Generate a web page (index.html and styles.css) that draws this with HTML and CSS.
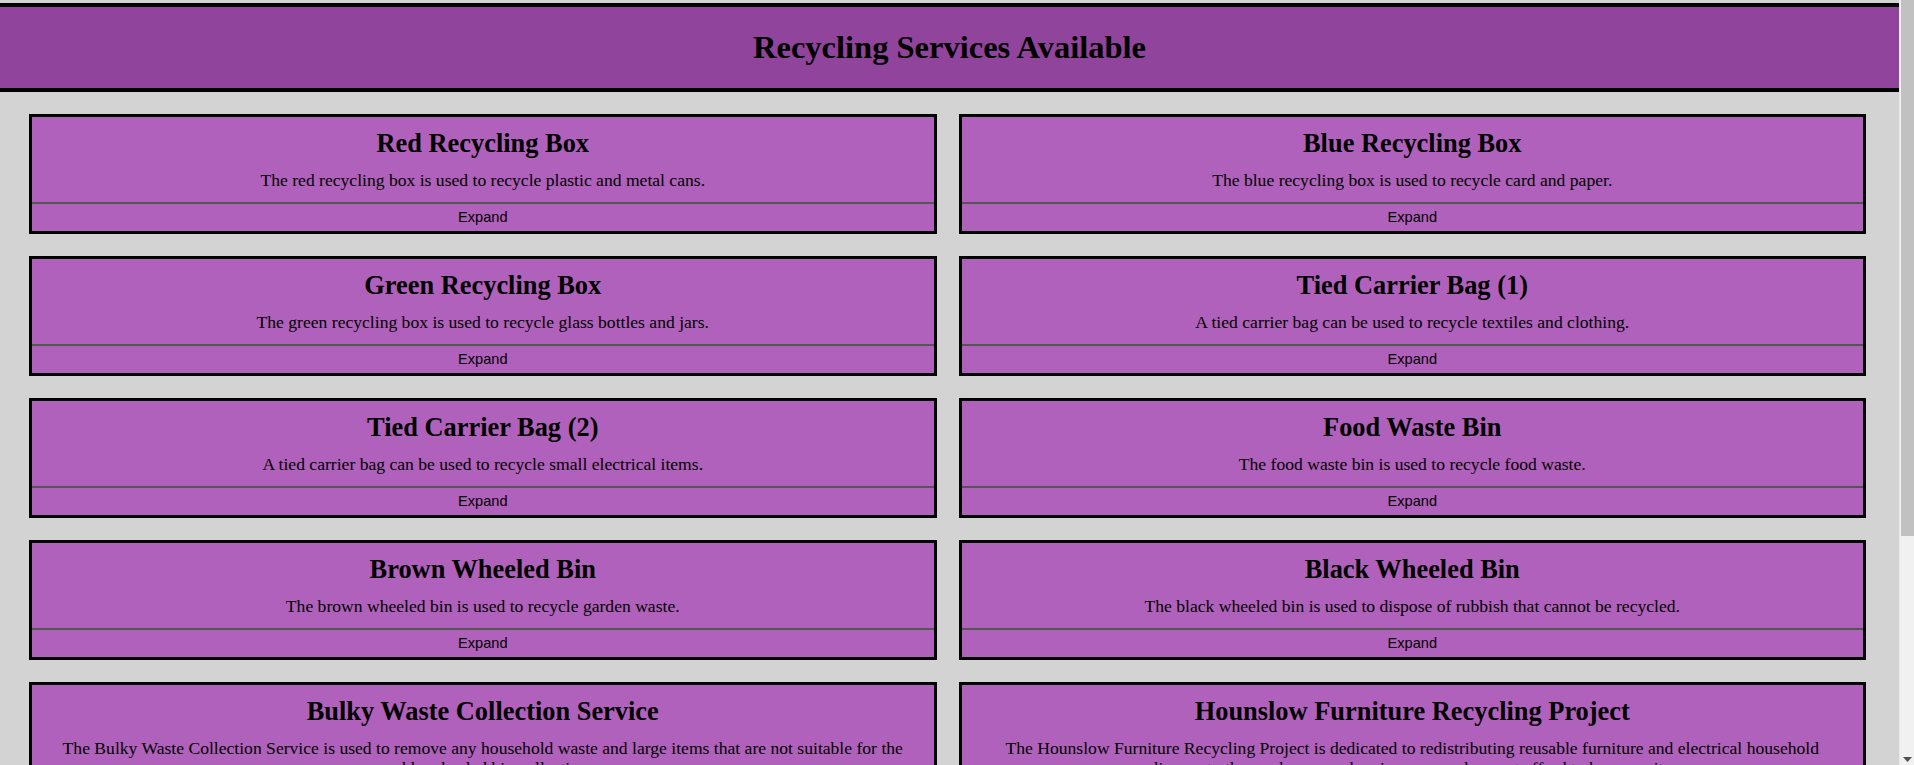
FILE: index.html
```html
<!DOCTYPE html>
<html lang="en">
<head>
<meta charset="utf-8">
<title>Recycling Services Available</title>
<link rel="stylesheet" href="styles.css">
</head>
<body>
<div class="page">
<header class="site-header">
  <h1 class="site-title">Recycling Services Available</h1>
</header>
<main class="services">
  <section class="card">
    <h2 class="card-title">Red Recycling Box</h2>
    <p class="card-text">The red recycling box is used to recycle plastic and metal cans.</p>
    <button class="expand" type="button">Expand</button>
  </section>
  <section class="card">
    <h2 class="card-title">Blue Recycling Box</h2>
    <p class="card-text">The blue recycling box is used to recycle card and paper.</p>
    <button class="expand" type="button">Expand</button>
  </section>
  <section class="card">
    <h2 class="card-title">Green Recycling Box</h2>
    <p class="card-text">The green recycling box is used to recycle glass bottles and jars.</p>
    <button class="expand" type="button">Expand</button>
  </section>
  <section class="card">
    <h2 class="card-title">Tied Carrier Bag (1)</h2>
    <p class="card-text">A tied carrier bag can be used to recycle textiles and clothing.</p>
    <button class="expand" type="button">Expand</button>
  </section>
  <section class="card">
    <h2 class="card-title">Tied Carrier Bag (2)</h2>
    <p class="card-text">A tied carrier bag can be used to recycle small electrical items.</p>
    <button class="expand" type="button">Expand</button>
  </section>
  <section class="card">
    <h2 class="card-title">Food Waste Bin</h2>
    <p class="card-text">The food waste bin is used to recycle food waste.</p>
    <button class="expand" type="button">Expand</button>
  </section>
  <section class="card">
    <h2 class="card-title">Brown Wheeled Bin</h2>
    <p class="card-text">The brown wheeled bin is used to recycle garden waste.</p>
    <button class="expand" type="button">Expand</button>
  </section>
  <section class="card">
    <h2 class="card-title">Black Wheeled Bin</h2>
    <p class="card-text">The black wheeled bin is used to dispose of rubbish that cannot be recycled.</p>
    <button class="expand" type="button">Expand</button>
  </section>
  <section class="card">
    <h2 class="card-title">Bulky Waste Collection Service</h2>
    <p class="card-text">The Bulky Waste Collection Service is used to remove any household waste and large items that are not suitable for the weekly wheeled bin collection.</p>
    <button class="expand" type="button">Expand</button>
  </section>
  <section class="card">
    <h2 class="card-title">Hounslow Furniture Recycling Project</h2>
    <p class="card-text">The Hounslow Furniture Recycling Project is dedicated to redistributing reusable furniture and electrical household appliances to those who are on low incomes and cannot afford to buy new items.</p>
    <button class="expand" type="button">Expand</button>
  </section>
  <section class="card">
    <h2 class="card-title">Textile Bank</h2>
    <p class="card-text">Textile banks can be used to recycle clothes, shoes and household linen.</p>
    <button class="expand" type="button">Expand</button>
  </section>
  <section class="card">
    <h2 class="card-title">Reuse and Recycling Centre</h2>
    <p class="card-text">The Reuse and Recycling Centre accepts a wide range of materials for recycling.</p>
    <button class="expand" type="button">Expand</button>
  </section>
</main>
</div>
<div class="scrollbar" aria-hidden="true">
  <div class="scroll-thumb"></div>
  <svg class="scroll-arrow" width="9" height="5" viewBox="0 0 9 5"><path d="M0 0H9L4.5 5Z" fill="#505050"/></svg>
</div>
</body>
</html>
```

FILE: styles.css
```css
html {
  background: #d3d3d3;
}

body {
  margin: 0;
  background: #d3d3d3;
  font-family: "Liberation Serif", "Times New Roman", serif;
  color: #000;
}

.page {
  margin-right: 15px;
}

.site-header {
  margin-top: 3px;
  background: #91449b;
  border-top: 4px solid #000;
  border-bottom: 4px solid #000;
  padding-top: 22px;
  height: 59px;
  text-align: center;
}

.site-title {
  margin: 0;
  font-size: 32.5px;
  line-height: 37px;
  font-weight: bold;
}

.services {
  display: grid;
  grid-template-columns: 1fr 1fr;
  gap: 22px;
  padding: 22px 33px 22px 29px;
}

.card {
  display: flex;
  flex-direction: column;
  background: #b061bb;
  border: 3px solid #000;
  padding-top: 11px;
  text-align: center;
  font-size: 17.6px;
}

.card-title {
  margin: 0 12px;
  font-size: 26.4px;
  line-height: 30px;
  font-weight: bold;
}

.card-text {
  flex: 1;
  margin: 12px 12px 12px;
  line-height: 20px;
}

.expand {
  display: block;
  width: 100%;
  margin: 0;
  padding: 5px 0;
  background: transparent;
  border: none;
  border-top: 2px solid #555;
  font-family: "Liberation Sans", Arial, sans-serif;
  font-size: 14.6px;
  line-height: 17px;
  color: #000;
  cursor: pointer;
}

.scrollbar {
  position: fixed;
  top: 0;
  right: 0;
  bottom: 0;
  width: 15px;
  background: #f1f1f1;
  border-left: 1px solid #e8e8e8;
  box-sizing: border-box;
}

.scroll-thumb {
  margin-left: 1px;
  height: 536px;
  background: #c1c1c1;
}

.scroll-arrow {
  position: absolute;
  bottom: 3px;
  left: 3px;
}
```
